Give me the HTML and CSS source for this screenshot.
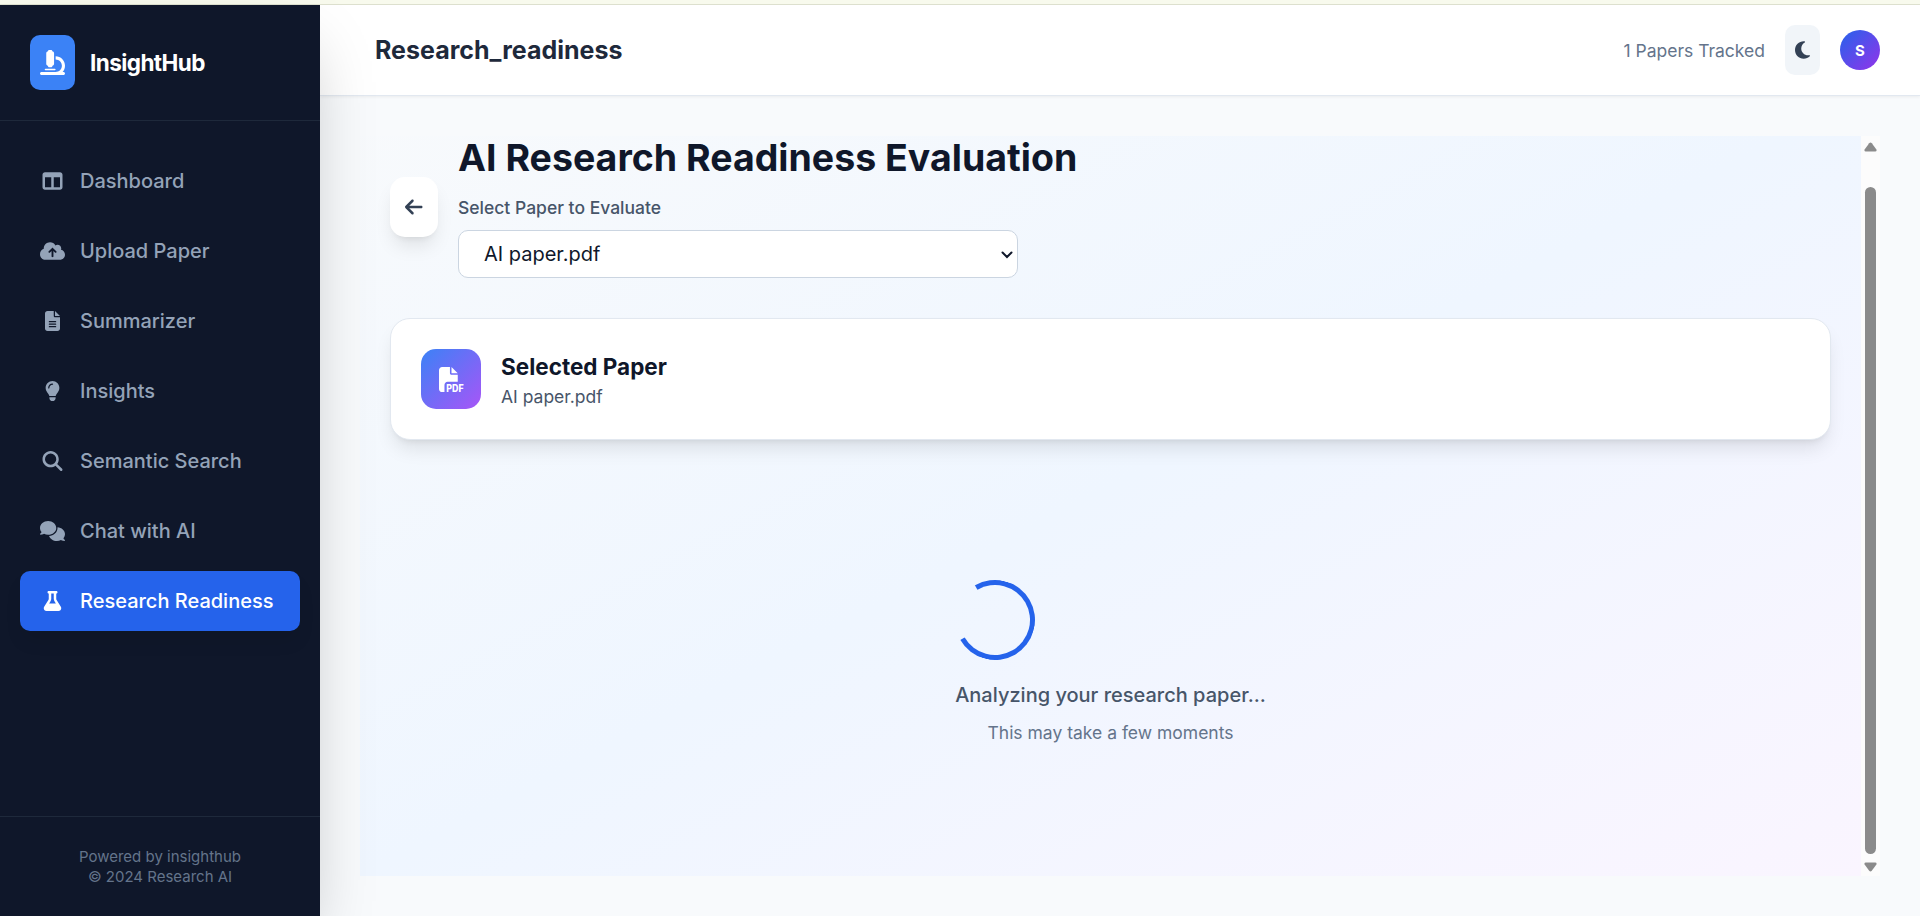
FILE: index.html
```html
<!DOCTYPE html>
<html lang="en">
  <head>
    <meta charset="UTF-8" />
    <meta name="viewport" content="width=device-width, initial-scale=1.0" />
    <title>InsightHub</title>
    <link rel="stylesheet" href="styles.css">
  </head>
  <body>
    <div class="top-strip"></div>
    <div class="app">
      <aside class="sidebar">
        <div class="brand">
          <div class="brand-icon">
            <svg class="icon-lg" viewBox="0 0 512 512"><path d="M160 32c0-17.7 14.3-32 32-32h32c17.7 0 32 14.3 32 32c17.7 0 32 14.3 32 32V288c0 17.7-14.3 32-32 32c0 17.7-14.3 32-32 32H192c-17.7 0-32-14.3-32-32c-17.7 0-32-14.3-32-32V64c0-17.7 14.3-32 32-32zM32 448H320c70.7 0 128-57.3 128-128s-57.3-128-128-128V128c106 0 192 86 192 192c0 49.2-18.5 94-48.9 128H480c17.7 0 32 14.3 32 32s-14.3 32-32 32H32c-17.7 0-32-14.3-32-32s14.3-32 32-32zm80-64H304c8.8 0 16 7.2 16 16s-7.2 16-16 16H112c-8.8 0-16-7.2-16-16s7.2-16 16-16z"/></svg>
          </div>
          <span class="brand-name">InsightHub</span>
        </div>

        <nav class="nav">
          <a class="nav-item">
            <svg class="icon" viewBox="0 0 512 512"><path d="M0 96C0 60.7 28.7 32 64 32H448c35.3 0 64 28.7 64 64V416c0 35.3-28.7 64-64 64H64c-35.3 0-64-28.7-64-64V96zm64 64V416H224V160H64zm384 0H288V416H448V160z"/></svg>
            <span>Dashboard</span>
          </a>
          <a class="nav-item">
            <svg class="icon" viewBox="0 0 640 512"><path d="M144 480C64.5 480 0 415.5 0 336c0-62.8 40.2-116.2 96.2-135.9c-.1-2.7-.2-5.4-.2-8.1c0-88.4 71.6-160 160-160c59.3 0 111 32.2 138.7 80.2C409.9 102 428.3 96 448 96c53 0 96 43 96 96c0 12.2-2.3 23.8-6.4 34.6C596 238.4 640 290.1 640 352c0 70.7-57.3 128-128 128H144zm79-217c-9.4 9.4-9.4 24.6 0 33.9s24.6 9.4 33.9 0l39-39V392c0 13.3 10.7 24 24 24s24-10.7 24-24V257.9l39 39c9.4 9.4 24.6 9.4 33.9 0s9.4-24.6 0-33.9l-80-80c-9.4-9.4-24.6-9.4-33.9 0l-80 80z"/></svg>
            <span>Upload Paper</span>
          </a>
          <a class="nav-item">
            <svg class="icon" viewBox="0 0 384 512"><path d="M64 0C28.7 0 0 28.7 0 64V448c0 35.3 28.7 64 64 64H320c35.3 0 64-28.7 64-64V160H256c-17.7 0-32-14.3-32-32V0H64zM256 0V128H384L256 0zM112 256H272c8.8 0 16 7.2 16 16s-7.2 16-16 16H112c-8.8 0-16-7.2-16-16s7.2-16 16-16zm0 64H272c8.8 0 16 7.2 16 16s-7.2 16-16 16H112c-8.8 0-16-7.2-16-16s7.2-16 16-16zm0 64H272c8.8 0 16 7.2 16 16s-7.2 16-16 16H112c-8.8 0-16-7.2-16-16s7.2-16 16-16z"/></svg>
            <span>Summarizer</span>
          </a>
          <a class="nav-item">
            <svg class="icon" viewBox="0 0 384 512"><path d="M272 384c9.6-31.9 29.5-59.1 49.2-86.2c5.2-7.1 10.4-14.2 15.4-21.4c19.8-28.5 31.4-63 31.4-100.3C368 78.8 289.2 0 192 0S16 78.8 16 176c0 37.3 11.6 71.9 31.4 100.3c5 7.2 10.2 14.3 15.4 21.4c19.8 27.1 39.7 54.4 49.2 86.2H272zM192 512c44.2 0 80-35.8 80-80V416H112v16c0 44.2 35.8 80 80 80zM112 176c0 8.8-7.2 16-16 16s-16-7.2-16-16c0-61.9 50.1-112 112-112c8.8 0 16 7.2 16 16s-7.2 16-16 16c-44.2 0-80 35.8-80 80z"/></svg>
            <span>Insights</span>
          </a>
          <a class="nav-item">
            <svg class="icon" viewBox="0 0 512 512"><path d="M416 208c0 45.9-14.9 88.3-40 122.7L502.6 457.4c12.5 12.5 12.5 32.8 0 45.3s-32.8 12.5-45.3 0L330.7 376c-34.4 25.2-76.8 40-122.7 40C93.1 416 0 322.9 0 208S93.1 0 208 0S416 93.1 416 208zM208 352a144 144 0 1 0 0-288 144 144 0 1 0 0 288z"/></svg>
            <span>Semantic Search</span>
          </a>
          <a class="nav-item">
            <svg class="icon" viewBox="0 0 640 512"><path d="M208 352c114.9 0 208-78.8 208-176S322.9 0 208 0S0 78.8 0 176c0 38.6 14.7 74.3 39.6 103.4c-3.5 9.4-8.7 17.7-14.2 24.7c-4.8 6.2-9.7 11-13.3 14.3c-1.8 1.6-3.3 2.9-4.3 3.7c-.5 .4-.9 .7-1.1 .8l-.2 .2C1 327.2-1.4 334.4 .8 340.9S9.1 352 16 352c21.8 0 43.8-5.6 62.1-12.5c9.2-3.5 17.8-7.4 25.3-11.4C134.1 343.3 169.8 352 208 352zM448 176c0 112.3-99.1 196.9-216.5 207C255.8 457.4 336.4 512 432 512c38.2 0 73.9-8.7 104.7-23.9c7.5 4 16 7.9 25.2 11.4c18.3 6.9 40.3 12.5 62.1 12.5c6.9 0 13.1-4.5 15.2-11.1c2.1-6.6-.2-13.8-5.8-17.9l-.2-.2c-.2-.2-.6-.4-1.1-.8c-1-.8-2.5-2-4.3-3.7c-3.6-3.3-8.5-8.1-13.3-14.3c-5.5-7-10.7-15.4-14.2-24.7c24.9-29 39.6-64.7 39.6-103.4c0-92.8-84.9-168.9-192.6-175.5c.4 5.1 .6 10.3 .6 15.5z"/></svg>
            <span>Chat with AI</span>
          </a>
          <a class="nav-item active">
            <svg class="icon" viewBox="0 0 448 512"><path d="M288 0H160 128C110.3 0 96 14.3 96 32s14.3 32 32 32V196.8c0 11.8-3.3 23.5-9.5 33.5L10.3 406.2C3.6 417.2 0 429.7 0 442.6C0 480.9 31.1 512 69.4 512H378.6c38.3 0 69.4-31.1 69.4-69.4c0-12.8-3.6-25.4-10.3-36.4L329.5 230.4c-6.2-10.1-9.5-21.7-9.5-33.5V64c17.7 0 32-14.3 32-32s-14.3-32-32-32H288zM192 196.8V64h64V196.8c0 23.7 6.6 46.9 19 67.1L309.5 320h-171L173 263.9c12.4-20.2 19-43.4 19-67.1z"/></svg>
            <span>Research Readiness</span>
          </a>
        </nav>

        <div class="sidebar-footer">
          <p>Powered by insighthub</p>
          <p>© 2024 Research AI</p>
        </div>
      </aside>

      <div class="content">
        <header class="header">
          <h2>Research_readiness</h2>
          <div class="header-right">
            <span class="tracked">1 Papers Tracked</span>
            <button class="theme-btn" aria-label="Toggle theme">
              <svg class="icon-moon" viewBox="0 0 384 512"><path d="M223.5 32C100 32 0 132.3 0 256S100 480 223.5 480c60.6 0 115.5-24.2 155.8-63.4c5-4.9 6.3-12.5 3.1-18.7s-10.1-9.7-17-8.5c-9.8 1.7-19.8 2.6-30.1 2.6c-96.9 0-175.5-78.8-175.5-176c0-65.8 36-123.1 89.3-153.3c6.1-3.5 9.2-10.5 7.7-17.3s-7.3-11.9-14.3-12.5c-6.3-.5-12.6-.8-19-.8z"/></svg>
            </button>
            <div class="avatar">S</div>
          </div>
        </header>

        <main class="main">
          <div class="panel">
            <div class="page-head">
              <button class="back-btn" aria-label="Back">
                <svg class="icon" viewBox="0 0 448 512"><path d="M9.4 233.4c-12.5 12.5-12.5 32.8 0 45.3l160 160c12.5 12.5 32.8 12.5 45.3 0s12.5-32.8 0-45.3L109.2 288 416 288c17.7 0 32-14.3 32-32s-14.3-32-32-32l-306.7 0L214.6 118.6c12.5-12.5 12.5-32.8 0-45.3s-32.8-12.5-45.3 0l-160 160z"/></svg>
              </button>
              <div class="picker">
                <h1>AI Research Readiness Evaluation</h1>
                <label for="paper">Select Paper to Evaluate</label>
                <div class="select-wrap">
                  <select id="paper">
                    <option>AI paper.pdf</option>
                  </select>
                  <svg class="select-arrow" viewBox="0 0 12 8"><path d="M1.5 1.5 6 6 10.5 1.5"/></svg>
                </div>
              </div>
            </div>

            <div class="card">
              <div class="card-icon">
                <svg class="icon-lg" viewBox="0 0 512 512">
                  <path d="M0 64C0 28.7 28.7 0 64 0H224V128c0 17.7 14.3 32 32 32H384V304H176c-35.3 0-64 28.7-64 64V512H64c-35.3 0-64-28.7-64-64V64zm384 64H256V0L384 128z"/>
                  <text class="pdf-label" x="150" y="504" textLength="354" lengthAdjust="spacingAndGlyphs">PDF</text>
                </svg>
              </div>
              <div>
                <h3>Selected Paper</h3>
                <p>AI paper.pdf</p>
              </div>
            </div>

            <div class="loading">
              <div>
                <div class="spinner"></div>
                <p class="loading-title">Analyzing your research paper...</p>
                <p class="loading-note">This may take a few moments</p>
              </div>
            </div>
          </div>

          <div class="scrollbar">
            <svg class="scroll-arrow" viewBox="0 0 13 10"><path d="M5.2 1.2Q6.5-.4 7.8 1.2L12.4 7.4Q13.2 9.5 11.4 9.5H1.6Q-.2 9.5.6 7.4Z"/></svg>
            <div class="scroll-thumb"></div>
            <svg class="scroll-arrow down" viewBox="0 0 13 10"><path d="M5.2 1.2Q6.5-.4 7.8 1.2L12.4 7.4Q13.2 9.5 11.4 9.5H1.6Q-.2 9.5.6 7.4Z"/></svg>
          </div>
        </main>
      </div>
    </div>
  </body>
</html>
```
FILE: styles.css
```css
:root {
  --slate-50: #f8fafc;
  --slate-500: #64748b;
  --slate-600: #475569;
  --slate-800: #1e293b;
  --slate-900: #0f172a;
  --blue: #2563eb;
}

* {
  box-sizing: border-box;
  margin: 0;
  padding: 0;
}

body {
  height: 100vh;
  display: flex;
  flex-direction: column;
  overflow: hidden;
  background: var(--slate-50);
  color: var(--slate-900);
  font-family: Inter, "Liberation Sans", sans-serif;
  font-size: 20px;
}

button {
  border: none;
  font: inherit;
}

svg {
  fill: currentColor;
  display: block;
  overflow: visible;
}

.icon {
  height: 20px;
}

.icon-lg {
  width: 25px;
  height: 25px;
}

.top-strip {
  height: 5px;
  flex: none;
  background: #f8faed;
  border-bottom: 1px solid #dfe2d0;
}

.app {
  flex: 1;
  min-height: 0;
  display: flex;
}

/* Sidebar */
.sidebar {
  width: 320px;
  flex: none;
  display: flex;
  flex-direction: column;
  background: var(--slate-900);
  box-shadow: 0 31px 62px -15px rgba(0, 0, 0, 0.25);
  z-index: 2;
}

.brand {
  display: flex;
  align-items: center;
  gap: 15px;
  height: 116px;
  padding: 0 30px;
  border-bottom: 1px solid var(--slate-800);
}

.brand-icon {
  display: flex;
  align-items: center;
  justify-content: center;
  width: 45px;
  height: 55px;
  border-radius: 10px;
  background: #3b82f6;
  color: #fff;
}

.brand-name {
  color: #fff;
  font-size: 22.5px;
  font-weight: 700;
  letter-spacing: -0.025em;
}

.nav {
  flex: 1;
  display: flex;
  flex-direction: column;
  gap: 10px;
  padding: 30px 20px;
}

.nav-item {
  display: flex;
  align-items: center;
  gap: 15px;
  height: 60px;
  padding: 0 20px;
  border-radius: 10px;
  color: #94a3b8;
  font-weight: 500;
}

.nav-item .icon {
  width: 25px;
}

.nav-item.active {
  background: var(--blue);
  color: #fff;
  box-shadow: 0 12px 19px -4px rgba(0, 0, 0, 0.1);
}

.sidebar-footer {
  height: 100px;
  padding-top: 30px;
  border-top: 1px solid var(--slate-800);
  color: var(--slate-500);
  font-size: 15px;
  line-height: 20px;
  text-align: center;
}

/* Header */
.content {
  flex: 1;
  min-width: 0;
  display: flex;
  flex-direction: column;
}

.header {
  height: 91px;
  flex: none;
  display: flex;
  align-items: center;
  justify-content: space-between;
  padding: 0 40px 0 55px;
  background: #fff;
  border-bottom: 1px solid #e2e8f0;
  box-shadow: 0 1px 3px rgba(0, 0, 0, 0.06);
}

.header h2 {
  color: var(--slate-800);
  font-size: 25px;
  font-weight: 700;
}

.header-right {
  display: flex;
  align-items: center;
  gap: 20px;
}

.tracked {
  color: var(--slate-500);
  font-size: 17.5px;
}

.theme-btn {
  display: flex;
  align-items: center;
  justify-content: center;
  width: 35px;
  height: 50px;
  border-radius: 10px;
  background: #f1f5f9;
  color: #334155;
}

.icon-moon {
  width: 15px;
  height: 20px;
}

.avatar {
  display: flex;
  align-items: center;
  justify-content: center;
  width: 40px;
  height: 40px;
  border-radius: 50%;
  background: linear-gradient(to bottom right, #2563eb, #9333ea);
  color: #fff;
  font-size: 15px;
  font-weight: 700;
}

/* Page */
.main {
  flex: 1;
  min-height: 0;
  display: flex;
  padding: 40px;
}

.panel {
  flex: 1;
  padding: 0 30px;
  background: linear-gradient(to bottom right, #f8fafc, #eff6ff, #faf5ff) bottom / 100% 779px no-repeat;
}

.page-head {
  display: flex;
  align-items: center;
  gap: 20px;
  margin-bottom: 40px;
}

.back-btn {
  display: flex;
  align-items: center;
  justify-content: center;
  width: 48px;
  height: 60px;
  border-radius: 15px;
  background: #fff;
  color: #334155;
  box-shadow: 0 12px 19px -4px rgba(0, 0, 0, 0.1), 0 5px 7px -5px rgba(0, 0, 0, 0.1);
}

.picker {
  width: 560px;
}

.picker h1 {
  font-size: 37.5px;
  font-weight: 700;
  line-height: 43px;
  white-space: nowrap;
}

.picker label {
  display: block;
  margin: 16px 0 10px;
  color: var(--slate-600);
  font-size: 17.5px;
  line-height: 25px;
  font-weight: 500;
}

.select-wrap {
  position: relative;
}

.picker select {
  appearance: none;
  display: block;
  width: 100%;
  height: 48px;
  padding: 0 30px 0 25px;
  border: 1px solid #cbd5e1;
  border-radius: 10px;
  background: #fff;
  color: var(--slate-900);
  font: inherit;
}

.select-arrow {
  position: absolute;
  top: 21px;
  right: 5px;
  width: 12px;
  height: 8px;
  fill: none;
  stroke: var(--slate-900);
  stroke-width: 2;
  stroke-linecap: round;
  pointer-events: none;
}

.card {
  display: flex;
  align-items: center;
  gap: 20px;
  height: 122px;
  padding: 0 30px;
  border: 1px solid #e2e8f0;
  border-radius: 20px;
  background: #fff;
  box-shadow: 0 12px 19px -4px rgba(0, 0, 0, 0.1), 0 5px 7px -5px rgba(0, 0, 0, 0.1);
}

.card-icon {
  display: flex;
  align-items: center;
  justify-content: center;
  width: 60px;
  height: 60px;
  border-radius: 15px;
  background: linear-gradient(to bottom right, #3b82f6, #a855f7);
  color: #fff;
}

.pdf-label {
  font-size: 200px;
  font-weight: 800;
}

.card h3 {
  font-size: 22.5px;
  font-weight: 700;
  line-height: 35px;
}

.card p {
  color: var(--slate-600);
  font-size: 17.5px;
  line-height: 25px;
}

.loading {
  display: flex;
  justify-content: center;
  padding-top: 140px;
}

.spinner {
  width: 80px;
  height: 80px;
  margin-bottom: 20px;
  border: 5px solid var(--blue);
  border-left-color: transparent;
  border-radius: 50%;
  transform: rotate(15deg);
}

.loading-title {
  color: var(--slate-600);
  font-weight: 500;
  line-height: 30px;
}

.loading-note {
  margin-top: 10px;
  color: var(--slate-500);
  font-size: 17.5px;
  line-height: 25px;
  text-align: center;
}

/* Scrollbar */
.scrollbar {
  width: 19px;
  display: flex;
  flex-direction: column;
  align-items: center;
  padding: 6px 0 4px;
  background: #fcfcfc;
  color: #8b8b8b;
}

.scroll-arrow {
  width: 13px;
  height: 10px;
  flex: none;
}

.scroll-arrow.down {
  transform: rotate(180deg);
}

.scroll-thumb {
  width: 11px;
  flex: 1;
  margin: 35px 0 8px;
  border-radius: 6px;
  background: #8b8b8b;
}
```
